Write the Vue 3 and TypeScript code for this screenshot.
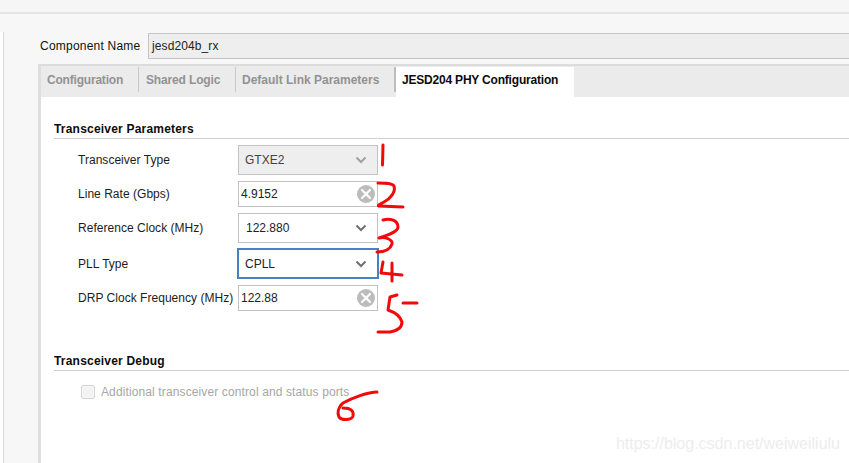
<script setup lang="ts">
type Row = { label: string; value: string; kind: 'locked' | 'text' | 'select' | 'focus' }

const tabs = ['Configuration', 'Shared Logic', 'Default Link Parameters']

const rows: Row[] = [
  { label: 'Transceiver Type', value: 'GTXE2', kind: 'locked' },
  { label: 'Line Rate (Gbps)', value: '4.9152', kind: 'text' },
  { label: 'Reference Clock (MHz)', value: '122.880', kind: 'select' },
  { label: 'PLL Type', value: 'CPLL', kind: 'focus' },
  { label: 'DRP Clock Frequency (MHz)', value: '122.88', kind: 'text' },
]

// hand-drawn red numbers on top of the dialog
const scribbles = [
  'M383 145 L382.5 165',
  'M378 183 C386 183 392 183 394 186 C396 192 390 199 384 202 C380 204 377 206 379 206 L403 207',
  'M383 220 C390 218 398 220 398 227 C398 232 388 235 379 238 C385 236 393 240 392 244 C390 250 383 252 377 252',
  'M383 262 L381 273 L402 275 M392 263 L392 281',
  'M397 295 L390 297 L388 310 C394 312 400 315 402 322 C402 328 396 331 390 332 L378 332 M403 303 L417 303',
  'M377 392 C368 392 352 398 343 403 C338 407 337 413 339 417 C342 421 352 420 353 416 C354 411 351 408 343 408',
]
</script>

<template>
  <div class="page">
    <div class="topband"></div>
    <div class="body">
      <div class="sidepanel"></div>
      <div class="main">
        <div class="namerow">
          <span class="namelabel">Component Name</span>
          <div class="namefield">jesd204b_rx</div>
        </div>
        <div class="tabpanel">
          <div class="tabstrip">
            <div v-for="t in tabs" :key="t" class="tab">{{ t }}</div>
            <div class="tab active">JESD204 PHY Configuration</div>
          </div>
          <div class="content">
            <h3 class="section">Transceiver Parameters</h3>
            <div class="form">
              <div v-for="r in rows" :key="r.label" class="row" :class="r.kind">
                <span class="label">{{ r.label }}</span>
                <div class="control">
                  <span class="value">{{ r.value }}</span>
                  <svg v-if="r.kind === 'text'" class="clear" width="18" height="18" viewBox="0 0 18 18">
                    <circle cx="9" cy="9" r="9" fill="#bcbcbc" />
                    <path d="M5 5 L13 13 M13 5 L5 13" stroke="#fff" stroke-width="2.2" stroke-linecap="round" />
                  </svg>
                  <svg v-else class="chevron" width="12" height="8" viewBox="0 0 12 8">
                    <path d="M1.5 1.5 L6 6 L10.5 1.5" fill="none" stroke-width="2" />
                  </svg>
                </div>
              </div>
            </div>
            <h3 class="section debug">Transceiver Debug</h3>
            <label class="check">
              <span class="box"></span>
              <span>Additional transceiver control and status ports</span>
            </label>
          </div>
        </div>
      </div>
    </div>
    <svg class="scribbles" width="849" height="463" viewBox="0 0 849 463">
      <path v-for="(d, i) in scribbles" :key="i" :d="d" fill="none" stroke="#f00a0a" stroke-width="3" stroke-linecap="round" stroke-linejoin="round" />
    </svg>
    <div class="watermark">https://blog.csdn.net/weiweiliulu</div>
  </div>
</template>

<style>
html, body { margin: 0; background: #f7f7f7; }
</style>

<style scoped>
.page {
  position: relative;
  width: 849px;
  height: 463px;
  overflow: hidden;
  background: #f7f7f7;
  font-family: "Liberation Sans", Arial, sans-serif;
  font-size: 12px;
  color: #111;
}
.topband {
  height: 12px;
  border-bottom: 2px solid #e4e4e4;
  background: #f6f6f6;
}
.body {
  display: flex;
  height: 449px;
}
.sidepanel {
  width: 3px;
  margin-top: 18px;
  background: #fff;
  border-right: 1px solid #d8d8d8;
}
.main {
  flex: 1;
  padding: 19px 0 0 34px;
  min-width: 0;
}
.namerow {
  display: flex;
  align-items: center;
  height: 26px;
  padding-left: 2px;
}
.namelabel {
  width: 108px;
  letter-spacing: 0.22px;
}
.namefield {
  flex: 1;
  height: 24px;
  line-height: 24px;
  padding-left: 3px;
  background: #eee;
  border: 1px solid #c4c4c4;
  border-right: 0;
  color: #222;
  letter-spacing: 0.1px;
}
.tabpanel {
  margin-top: 5px;
  height: 399px;
  border-left: 3px solid #dedede;
  border-top: 2px solid #dcdcdc;
  background: #fff;
}
.tabstrip {
  display: flex;
  height: 31px;
  background: #ebebeb;
}
.tab {
  box-sizing: border-box;
  height: 25px;
  margin-top: 1px;
  padding-left: 6px;
  line-height: 26px;
  font-weight: 700;
  color: #929292;
  border-right: 1px solid #c8c8c8;
  white-space: nowrap;
  letter-spacing: -0.2px;
}
.tab:nth-child(1) { width: 98px; }
.tab:nth-child(2) { width: 97px; padding-left: 7px; letter-spacing: -0.15px; }
.tab:nth-child(3) { width: 160px; padding-left: 6px; border-right: 2px solid #bdbdbd; letter-spacing: 0; }
.tab.active {
  height: 30px;
  width: 178px;
  padding-left: 6px;
  background: #fff;
  color: #0c0c0c;
  border-right: 0;
  letter-spacing: -0.2px;
}
.content {
  padding: 25px 0 0 13px;
}
.section {
  margin: 0;
  height: 16px;
  line-height: 14px;
  font-size: 12px;
  font-weight: 700;
  color: #0c0c0c;
  border-bottom: 1px solid #cfcfcf;
  letter-spacing: 0.2px;
}
.form {
  display: flex;
  flex-direction: column;
  gap: 6px;
  padding: 6px 0 0 24px;
}
.row {
  display: flex;
  align-items: center;
}
.label {
  width: 160px;
  color: #1c1c1c;
  letter-spacing: 0.03px;
}
.control {
  width: 140px;
  box-sizing: border-box;
  display: flex;
  align-items: center;
  justify-content: space-between;
  border: 1px solid #c2c2c2;
  background: #fff;
  padding: 0 10px 0 6px;
  color: #222;
}
.locked .control {
  height: 30px;
  background: #eee;
  color: #444;
}
.text .control {
  height: 26px;
  padding: 0 2px 0 2px;
}
.select .control {
  height: 30px;
  padding-left: 7px;
}
.focus {
  margin-top: -1px;
}
.focus .control {
  width: 142px;
  height: 31px;
  margin-left: -1px;
  border: 2px solid #4a7fc7;
  padding: 0 10px 0 6px;
}
.chevron path { stroke: #707070; }
.locked .chevron path { stroke: #a0a0a0; }
.section.debug {
  margin-top: 43px;
}
.check {
  display: flex;
  align-items: center;
  gap: 6px;
  margin: 14px 0 0 27px;
  color: #a6a6a6;
  letter-spacing: 0.12px;
}
.box {
  width: 12px;
  height: 12px;
  border: 1px solid #d8d8d8;
  border-radius: 2px;
  background: #f4f4f4;
}
.scribbles {
  position: absolute;
  left: 0;
  top: 0;
  pointer-events: none;
}
.watermark {
  position: absolute;
  right: 9px;
  bottom: 10px;
  font-size: 16px;
  color: #ededed;
}
</style>
